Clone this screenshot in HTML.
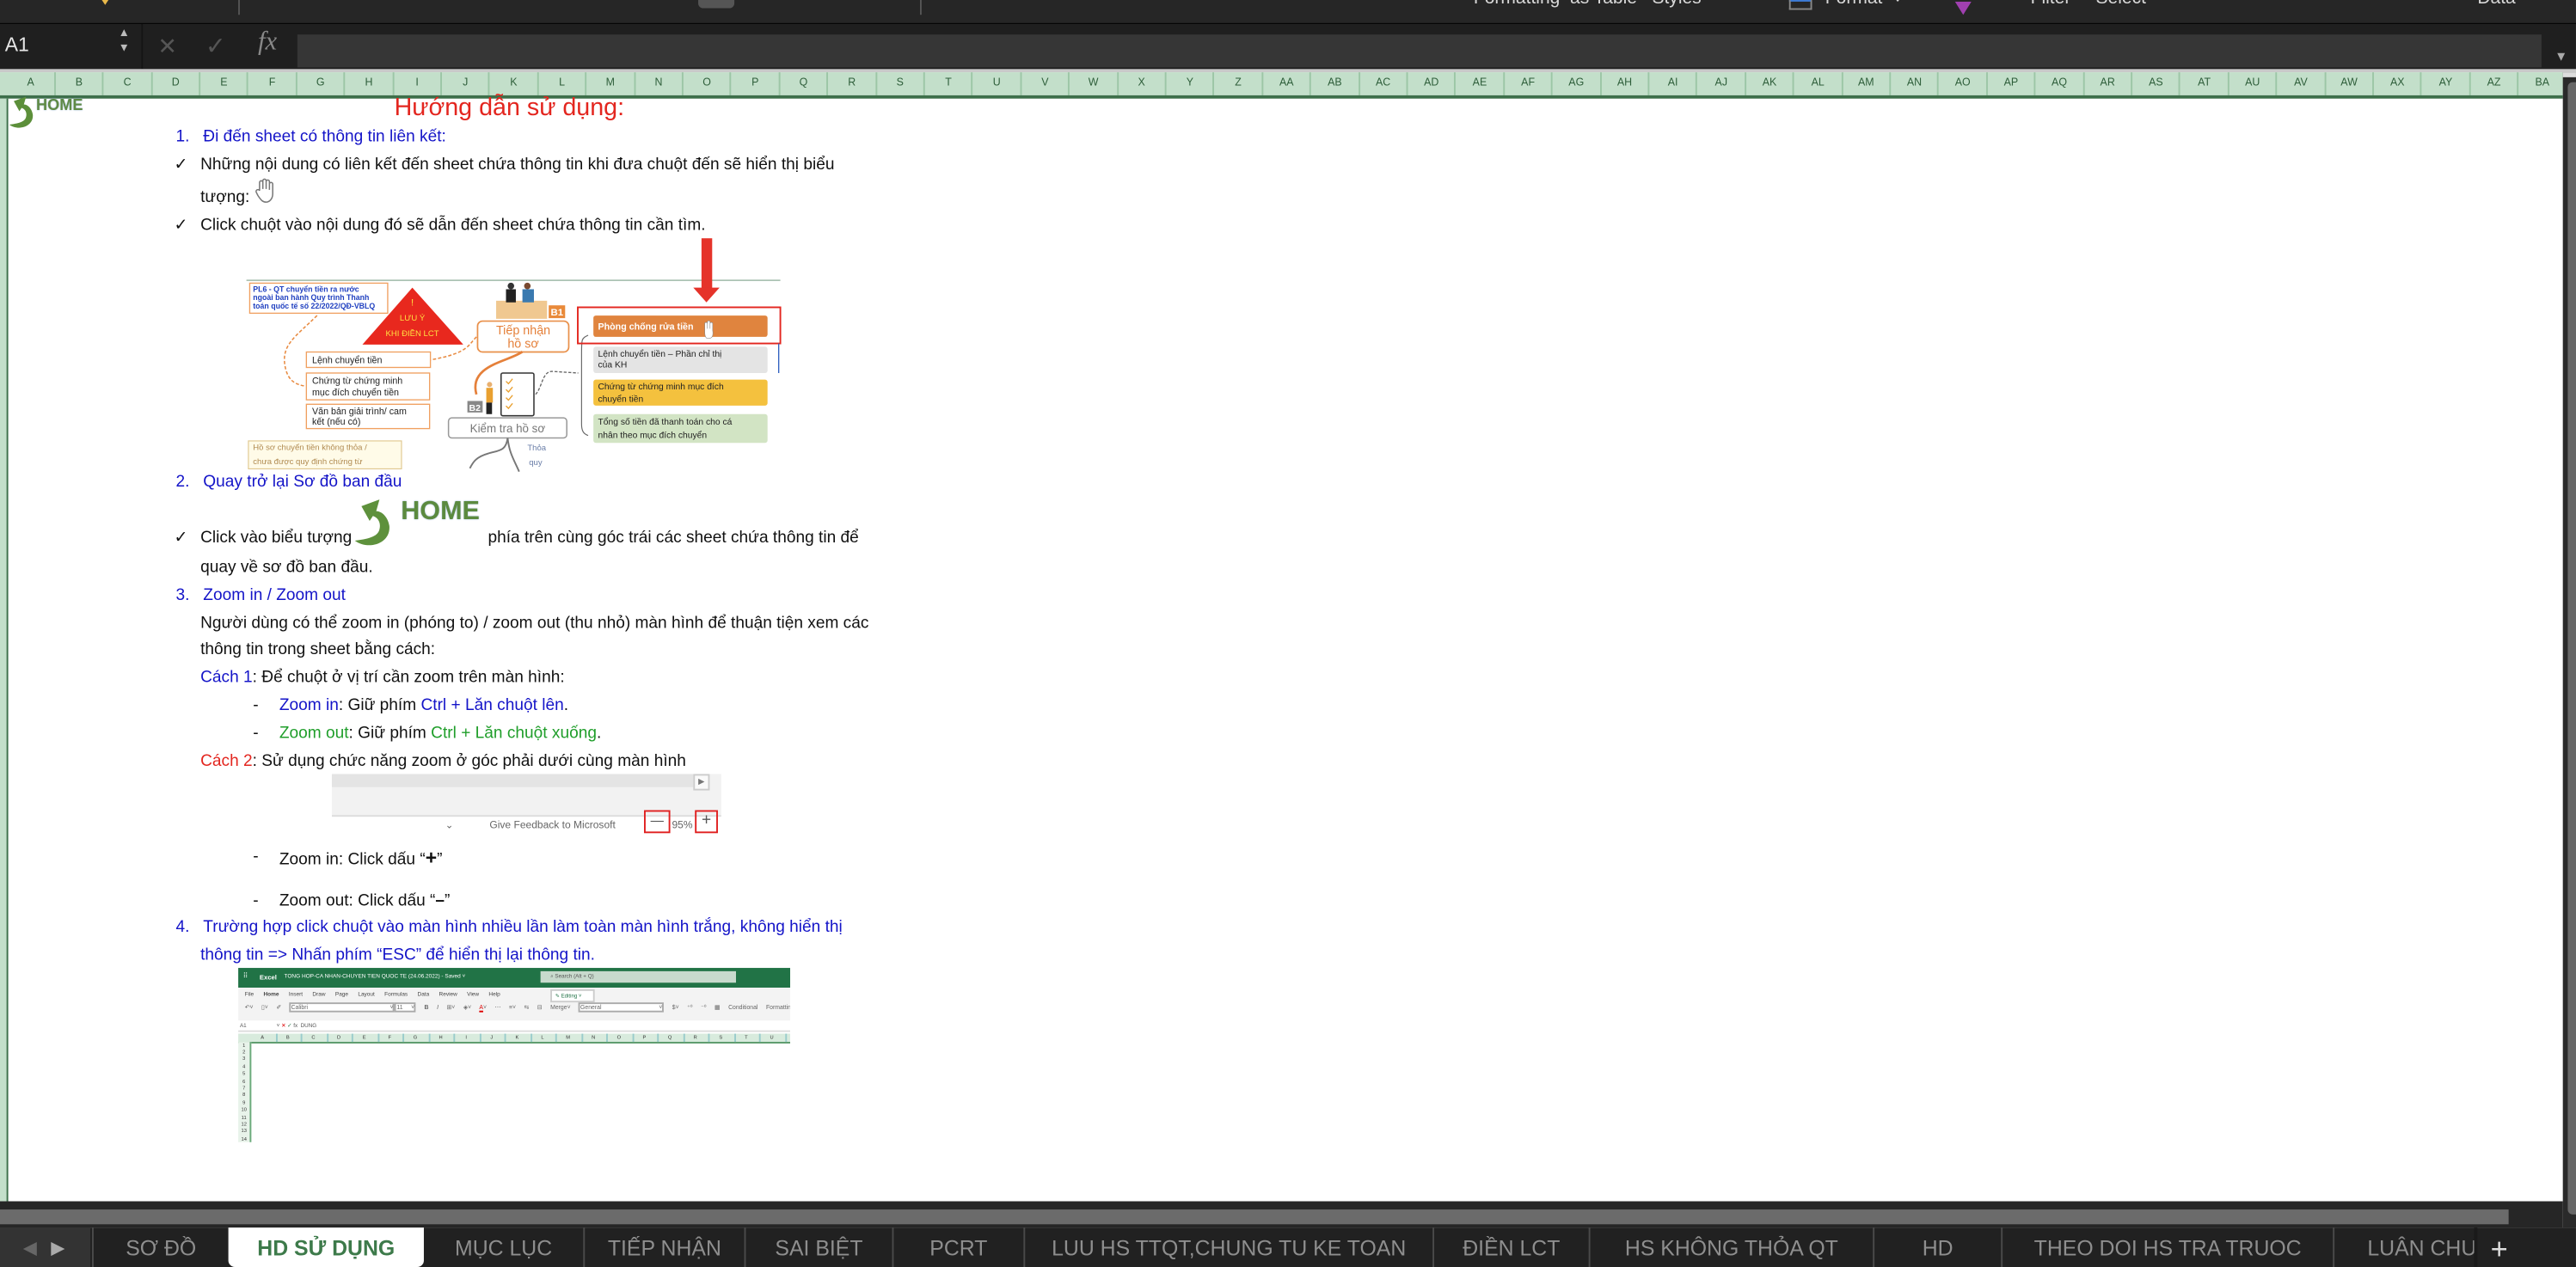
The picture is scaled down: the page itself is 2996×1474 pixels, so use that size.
<!DOCTYPE html>
<html><head><meta charset="utf-8">
<style>
html,body{margin:0;padding:0;background:#fff;width:2996px;height:1474px;overflow:hidden}
#w{position:absolute;left:0;top:0;width:1568px;height:771px;transform:scale(1.9107,1.9118);transform-origin:0 0;font-family:"Liberation Sans",Arial,sans-serif;overflow:hidden;background:#fff}
.a{position:absolute;white-space:nowrap}
.t{position:absolute;white-space:nowrap;font-size:10px;line-height:12px;color:#111}
.b{color:#1414c8}
.g{color:#1f9e2a}
.r{color:#e3261f}
.ch{position:absolute;top:44px;height:14px;width:29.4px;font-size:6.5px;line-height:14px;text-align:center;color:#2e5e3a;border-right:1px solid #9cc6a6;box-sizing:border-box}
.tab{position:absolute;top:747px;height:24px;font-size:13px;line-height:26px;color:#8e8e8e;text-align:center;border-left:1px solid #4a4a4a;box-sizing:border-box;white-space:nowrap;overflow:hidden}
</style></head><body><div id="w">
<!-- ribbon -->
<div class="a" style="left:0;top:0;width:1568px;height:14px;background:#262626;border-bottom:1.5px solid #050505"></div>
<div class="a" style="left:58px;top:-6px;width:12px;height:10px;"><svg width="12" height="10"><path d="M2 0 L10 0 L6 6Z" fill="#e8b84a"/></svg></div>
<div class="a" style="left:425px;top:0;width:22px;height:5px;background:#555;border-radius:0 0 3px 3px"></div>
<div class="a" style="left:145px;top:0;width:1px;height:9px;background:#555"></div>
<div class="a" style="left:560px;top:0;width:1px;height:9px;background:#555"></div>
<div class="a" style="left:897px;top:-7px;font-size:11px;color:#d8d8d8">Formatting &nbsp;as Table &nbsp;&nbsp;Styles</div>
<div class="a" style="left:1089px;top:-2px;width:14px;height:8px;border:1px solid #888;border-top:3px solid #3d7bd6;box-sizing:border-box"></div>
<div class="a" style="left:1111px;top:-7px;font-size:11px;color:#d8d8d8">Format &nbsp;˅</div>
<div class="a" style="left:1190px;top:-2px"><svg width="10" height="10"><path d="M0 0 L10 0 L5 8Z" fill="#a040b0"/></svg></div>
<div class="a" style="left:1236px;top:-7px;font-size:11px;color:#d8d8d8">Filter &nbsp;&nbsp;&nbsp;&nbsp;Select</div>
<div class="a" style="left:1508px;top:-7px;font-size:11px;color:#d8d8d8">Data</div>
<!-- formula bar -->
<div class="a" style="left:0;top:15px;width:1568px;height:28px;background:#1f1f1f"></div>
<div class="a" style="left:3px;top:20px;font-size:12px;color:#e6e6e6">A1</div>
<div class="a" style="left:72px;top:16px;font-size:7px;color:#bbb;line-height:9px">▲<br>▼</div>
<div class="a" style="left:86px;top:15px;width:1px;height:27px;background:#151515"></div>
<div class="a" style="left:96px;top:20px;font-size:14px;color:#555">✕</div>
<div class="a" style="left:125px;top:19px;font-size:15px;color:#555">✓</div>
<div class="a" style="left:157px;top:17px;font-size:16px;color:#888;font-family:'Liberation Serif',serif;font-style:italic">fx</div>
<div class="a" style="left:181px;top:21px;width:1366px;height:20px;background:#363636"></div>
<div class="a" style="left:1555px;top:30px;font-size:8px;color:#aaa">▼</div>
<div class="a" style="left:0;top:42px;width:1568px;height:2px;background:#c9c9c9"></div>
<!-- column headers -->
<div class="a" style="left:0;top:44px;width:1568px;height:14px;background:#c3dfca"></div>
<div id="cols"></div>
<div class="a" style="left:0;top:58px;width:1560px;height:2px;background:#3d6f4a"></div>
<!-- row header strip -->
<div class="a" style="left:0;top:60px;width:4px;height:671px;background:#c3dfca;border-right:1.5px solid #3d6f4a"></div>
<!-- right scrollbar -->
<div class="a" style="left:1559.6px;top:44px;width:9px;height:703px;background:#2a2a2a"></div>
<div class="a" style="left:1560px;top:44px;width:8px;height:3px;background:#ddd"></div>
<div class="a" style="left:1562.5px;top:50px;width:6px;height:689px;background:#676767;border-radius:3px 0 0 3px"></div>

<!-- HOME small -->
<svg class="a" style="left:5px;top:57px" width="17" height="22" viewBox="0 0 25 31"><path d="M1 27 C9 33 23 29 22 18 C21 12 17 9 14 9 L16 2 L5 6 L10 15 L12 12 C15 13 17 16 16 20 C15 25 8 26 1 27Z" fill="#5c8f3a"/></svg>
<div class="a" style="left:22px;top:59px;font-size:9.5px;font-weight:bold;color:#5f8a45;text-shadow:0 0 1px #9bb8d8">HOME</div>

<div class="a r" style="left:240px;top:57px;font-size:15px">Hướng dẫn sử dụng:</div>

<div class="t b" style="left:107px;top:78px">1.&nbsp;&nbsp;&nbsp;Đi đến sheet có thông tin liên kết:</div>
<div class="t" style="left:106px;top:95px">✓</div>
<div class="t" style="left:122px;top:95px">Những nội dung có liên kết đến sheet chứa thông tin khi đưa chuột đến sẽ hiển thị biểu</div>
<div class="t" style="left:122px;top:115px">tượng:</div>
<svg class="a" style="left:155px;top:108px" width="14" height="16" viewBox="0 0 14 16"><path d="M3 8 V3 a1 1 0 0 1 2 0 V7 V2 a1 1 0 0 1 2 0 V7 V2.5 a1 1 0 0 1 2 0 V7.5 V4 a1 1 0 0 1 2 0 V10 C11 13 9 15 7 15 C5 15 4 14 2 11 L1 9 a1 1 0 0 1 2 -1Z" fill="#fff" stroke="#777" stroke-width=".8"/></svg>
<div class="t" style="left:106px;top:132px">✓</div>
<div class="t" style="left:122px;top:132px">Click chuột vào nội dung đó sẽ dẫn đến sheet chứa thông tin cần tìm.</div>

<!-- mindmap image -->
<svg class="a" style="left:0;top:0" width="500" height="300" viewBox="0 0 500 300">
<line x1="150" y1="170.6" x2="475" y2="170.6" stroke="#9fb9a8" stroke-width=".8"/>
<rect x="427" y="145" width="6.5" height="31" fill="#e5332a"/>
<path d="M422 175 L438 175 L430 184Z" fill="#e5332a"/>
<rect x="152" y="172.3" width="84" height="18.3" fill="#fff" stroke="#f0a060" stroke-width=".7"/>
<text x="154" y="177.5" font-size="4.6" font-weight="bold" fill="#2040c0" font-family="Liberation Sans">PL6 - QT chuyển tiền ra nước</text>
<text x="154" y="182.6" font-size="4.6" font-weight="bold" fill="#2040c0" font-family="Liberation Sans">ngoài ban hành Quy trình Thanh</text>
<text x="154" y="187.8" font-size="4.6" font-weight="bold" fill="#2040c0" font-family="Liberation Sans">toán quốc tế số 22/2022/QĐ-VBLQ</text>
<path d="M251 175 L282 209.7 L220.6 209.7Z" fill="#e8281e"/>
<text x="251" y="186" font-size="6" fill="#ffe040" text-anchor="middle" font-family="Liberation Sans">!</text>
<text x="251" y="195" font-size="5" fill="#ffe040" text-anchor="middle" font-family="Liberation Sans">LƯU Ý</text>
<text x="251" y="204.5" font-size="5" fill="#ffe040" text-anchor="middle" font-family="Liberation Sans">KHI ĐIỀN LCT</text>
<path d="M193 192 C180 205 170 210 174 225 C176 232 180 234 186 235" fill="none" stroke="#e88a40" stroke-width=".8" stroke-dasharray="2 1.2"/>
<path d="M290 205 C285 210 285 215 262 219" fill="none" stroke="#e88a40" stroke-width=".8" stroke-dasharray="2 1.2"/>
<rect x="186.5" y="214.2" width="75.5" height="9.4" fill="#fff" stroke="#f0a060" stroke-width=".7"/>
<text x="190" y="221" font-size="5.6" fill="#222" font-family="Liberation Sans">Lệnh chuyển tiền</text>
<rect x="186.5" y="227" width="75" height="16.3" fill="#fff" stroke="#f0a060" stroke-width=".7"/>
<text x="190" y="233.5" font-size="5.6" fill="#222" font-family="Liberation Sans">Chứng từ chứng minh</text>
<text x="190" y="240.5" font-size="5.6" fill="#222" font-family="Liberation Sans">mục đích chuyển tiền</text>
<rect x="186.5" y="246" width="75" height="14.8" fill="#fff" stroke="#f0a060" stroke-width=".7"/>
<text x="190" y="252" font-size="5.6" fill="#222" font-family="Liberation Sans">Văn bản giải trình/ cam</text>
<text x="190" y="258.5" font-size="5.6" fill="#222" font-family="Liberation Sans">kết (nếu có)</text>
<rect x="151.2" y="268.3" width="93.2" height="17" fill="#fffbe8" stroke="#e0c890" stroke-width=".6"/>
<text x="154" y="273.8" font-size="5" fill="#b08a50" font-family="Liberation Sans">Hồ sơ chuyển tiền không thỏa /</text>
<text x="154" y="282.5" font-size="5" fill="#b08a50" font-family="Liberation Sans">chưa được quy định chứng từ</text>
<rect x="302" y="183" width="31" height="11" fill="#f0c890"/>
<circle cx="311" cy="174" r="2" fill="#333"/><rect x="308" y="176" width="6" height="8" fill="#222"/>
<circle cx="321" cy="174" r="2" fill="#7a4a30"/><rect x="318" y="176" width="7" height="8" fill="#3a7ab0"/>
<rect x="334" y="185.8" width="10" height="7.8" fill="#e98a3a"/>
<text x="335.2" y="192" font-size="6" font-weight="bold" fill="#fff" font-family="Liberation Sans">B1</text>
<rect x="290.7" y="195.4" width="55.5" height="18.8" rx="3" fill="#fff" stroke="#e9904a" stroke-width=".9"/>
<text x="318.5" y="203.5" font-size="7.5" fill="#e5803a" text-anchor="middle" font-family="Liberation Sans">Tiếp nhận</text>
<text x="318.5" y="211.5" font-size="7.5" fill="#e5803a" text-anchor="middle" font-family="Liberation Sans">hồ sơ</text>
<path d="M318 214 C310 220 285 222 290 240" fill="none" stroke="#e5803a" stroke-width="1.4"/>
<rect x="305" y="227" width="20" height="26" rx="1" fill="#fff" stroke="#333" stroke-width=".8"/>
<path d="M308 232 l1.5 1.5 2.5 -3 M308 237 l1.5 1.5 2.5 -3 M308 242 l1.5 1.5 2.5 -3 M308 247 l1.5 1.5 2.5 -3" stroke="#e9a030" stroke-width=".7" fill="none"/>
<circle cx="298" cy="234" r="1.6" fill="#e8b070"/><rect x="296" y="236" width="4" height="9" fill="#e9a030"/><rect x="296" y="245" width="3.5" height="7" fill="#222"/>
<rect x="284.5" y="244" width="9.3" height="7" fill="#888"/>
<text x="285.5" y="250" font-size="5.5" font-weight="bold" fill="#fff" font-family="Liberation Sans">B2</text>
<path d="M326 240 C330 236 330 226 336 226 L352 227" fill="none" stroke="#666" stroke-width=".7" stroke-dasharray="1.8 1"/>
<rect x="273" y="254.3" width="72" height="12.2" rx="2" fill="#fff" stroke="#999" stroke-width=".8"/>
<text x="309" y="263" font-size="7" fill="#777" text-anchor="middle" font-family="Liberation Sans">Kiểm tra hồ sơ</text>
<path d="M309 266.5 C308 275 303 274 297 276 C290 278 288 281 286 285" fill="none" stroke="#777" stroke-width="1"/>
<path d="M309 266.5 C310 276 313 280 316 287" fill="none" stroke="#777" stroke-width="1"/>
<text x="321" y="274" font-size="5" fill="#6a7ea8" font-family="Liberation Sans">Thỏa</text>
<text x="322" y="283" font-size="5" fill="#6a7ea8" font-family="Liberation Sans">quy</text>
<path d="M358 204 C354 206 354 206 354 215 L354 258 C354 262 355 264 358 265" fill="none" stroke="#666" stroke-width=".6"/>
<rect x="351.7" y="187" width="123.3" height="22" fill="none" stroke="#e3261f" stroke-width="1"/>
<rect x="361.2" y="192" width="106" height="13" rx="1.5" fill="#e0843e"/>
<text x="364" y="200.5" font-size="5.6" font-weight="bold" fill="#fff" font-family="Liberation Sans">Phòng chống rửa tiền</text>
<path d="M429 202 v-5 a.8 .8 0 0 1 1.6 0 v3 v-4 a.8 .8 0 0 1 1.6 0 v4 v-3 a.8 .8 0 0 1 1.6 0 v4 C434.5 205 433 206 431 206 C430 206 429 205 429 202Z" fill="#fff" stroke="#888" stroke-width=".3"/>
<rect x="361.2" y="211" width="106" height="16" rx="1.5" fill="#e4e4e4"/>
<text x="364" y="217" font-size="5.4" fill="#222" font-family="Liberation Sans">Lệnh chuyển tiền – Phần chỉ thị</text>
<text x="364" y="223.5" font-size="5.4" fill="#222" font-family="Liberation Sans">của KH</text>
<line x1="474" y1="209" x2="474" y2="227" stroke="#3060c0" stroke-width=".7"/>
<rect x="361.2" y="231" width="106" height="15.8" rx="1.5" fill="#f4c13e"/>
<text x="364" y="237" font-size="5.4" fill="#222" font-family="Liberation Sans">Chứng từ chứng minh mục đích</text>
<text x="364" y="244.5" font-size="5.4" fill="#222" font-family="Liberation Sans">chuyển tiền</text>
<rect x="361.2" y="252" width="106" height="17.5" rx="1.5" fill="#d2e4c4"/>
<text x="364" y="258.5" font-size="5.4" fill="#222" font-family="Liberation Sans">Tổng số tiền đã thanh toán cho cá</text>
<text x="364" y="266.5" font-size="5.4" fill="#222" font-family="Liberation Sans">nhân theo mục đích chuyển</text>
</svg>

<div class="t b" style="left:107px;top:288px">2.&nbsp;&nbsp;&nbsp;Quay trở lại Sơ đồ ban đầu</div>
<svg class="a" style="left:214px;top:302px" width="27" height="31" viewBox="0 0 25 31"><path d="M1 27 C9 33 23 29 22 18 C21 12 17 9 14 9 L16 2 L5 6 L10 15 L12 12 C15 13 17 16 16 20 C15 25 8 26 1 27Z" fill="#5e913c"/></svg>
<div class="a" style="left:244px;top:303px;font-size:16px;font-weight:bold;color:#5b8a3f;text-shadow:0 0 1px #8fb0d8">HOME</div>
<div class="t" style="left:106px;top:322px">✓</div>
<div class="t" style="left:122px;top:322px">Click vào biểu tượng</div>
<div class="t" style="left:297px;top:322px">phía trên cùng góc trái các sheet chứa thông tin để</div>
<div class="t" style="left:122px;top:340px">quay về sơ đồ ban đầu.</div>
<div class="t b" style="left:107px;top:357px">3.&nbsp;&nbsp;&nbsp;Zoom in / Zoom out</div>
<div class="t" style="left:122px;top:374px">Người dùng có thể zoom in (phóng to) / zoom out (thu nhỏ) màn hình để thuận tiện xem các</div>
<div class="t" style="left:122px;top:390px">thông tin trong sheet bằng cách:</div>
<div class="t" style="left:122px;top:407px"><span class="b">Cách 1</span>: Để chuột ở vị trí cần zoom trên màn hình:</div>
<div class="t" style="left:154px;top:424px">-</div>
<div class="t" style="left:170px;top:424px"><span class="b">Zoom in</span>: Giữ phím <span class="b">Ctrl + Lăn chuột lên</span>.</div>
<div class="t" style="left:154px;top:441px">-</div>
<div class="t" style="left:170px;top:441px"><span class="g">Zoom out</span>: Giữ phím <span class="g">Ctrl + Lăn chuột xuống</span>.</div>
<div class="t" style="left:122px;top:458px"><span class="r">Cách 2</span>: Sử dụng chức năng zoom ở góc phải dưới cùng màn hình</div>

<!-- zoom bar image -->
<div class="a" style="left:202px;top:471px;width:237px;height:25px;background:#f2f2f2;border-bottom:1px solid #ddd"></div>
<div class="a" style="left:202px;top:471px;width:220px;height:8px;background:#e4e4e4"></div>
<div class="a" style="left:422px;top:471px;width:8px;height:8px;background:#fafafa;border:0.5px solid #ccc;font-size:5px;line-height:8px;color:#777;text-align:center">▶</div>
<div class="a" style="left:271px;top:499px;font-size:6px;color:#666">⌄</div>
<div class="a" style="left:298px;top:499px;font-size:6.3px;color:#666">Give Feedback to Microsoft</div>
<div class="a" style="left:392px;top:493px;width:14px;height:12px;border:1.3px solid #e02020;font-size:8px;line-height:11px;text-align:center;color:#555">—</div>
<div class="a" style="left:409px;top:499px;font-size:6.3px;color:#666">95%</div>
<div class="a" style="left:423px;top:493px;width:12px;height:12px;border:1.3px solid #e02020;font-size:10px;line-height:12px;text-align:center;color:#555">+</div>

<div class="t" style="left:154px;top:516px">-</div>
<div class="t" style="left:170px;top:516px">Zoom in: Click dấu “<b style="font-size:12px">+</b>”</div>
<div class="t" style="left:154px;top:543px">-</div>
<div class="t" style="left:170px;top:543px">Zoom out: Click dấu “<b>–</b>”</div>
<div class="t b" style="left:107px;top:559px">4.&nbsp;&nbsp;&nbsp;Trường hợp click chuột vào màn hình nhiều lần làm toàn màn hình trắng, không hiển thị</div>
<div class="t b" style="left:122px;top:576px">thông tin =&gt; Nhấn phím “ESC” để hiển thị lại thông tin.</div>

<!-- excel screenshot -->
<div class="a" style="left:145px;top:589px;width:336px;height:106px;background:#fff;overflow:hidden">
 <div class="a" style="left:0;top:0;width:336px;height:11.5px;background:#217346"></div>
 <div class="a" style="left:3px;top:2px;font-size:4px;color:#fff">⠿</div>
 <div class="a" style="left:13px;top:3px;font-size:4px;color:#fff;font-weight:bold">Excel</div>
 <div class="a" style="left:28px;top:3px;font-size:3.4px;color:#fff">TONG HOP-CA NHAN-CHUYEN TIEN QUOC TE (24.06.2022) - Saved ˅</div>
 <div class="a" style="left:184px;top:2px;width:119px;height:7px;background:#c8dacd;font-size:3.3px;line-height:7px;color:#555;text-indent:6px">⌕ Search (Alt + Q)</div>
 <div class="a" style="left:0;top:11.5px;width:336px;height:20px;background:#f3f3f3"></div>
 <div class="a" style="left:4px;top:13.5px;font-size:3.4px;color:#444;word-spacing:5px">File <b>Home</b> Insert Draw Page&nbsp;Layout Formulas Data Review View Help</div>
 <div class="a" style="left:190px;top:13px;width:25px;height:6px;border:0.5px solid #ccc;background:#fff;font-size:3.2px;line-height:6px;color:#217346;text-indent:2px">✎ Editing ˅</div>
 <div class="a" style="left:4px;top:22px;font-size:3.6px;color:#666;word-spacing:4px">↶˅ ▯˅ ✐ <span style="border:0.4px solid #aaa;background:#fff">Calibri&nbsp;&nbsp;&nbsp;&nbsp;&nbsp;&nbsp;&nbsp;&nbsp;&nbsp;&nbsp;˅</span><span style="border:0.4px solid #aaa;background:#fff">11 ˅</span> <b>B</b> <i>I</i> ⊞˅ ◈˅ <u style="color:#d00">A</u>˅ ⋯ ≡˅ ⇆ ⊟ Merge˅ <span style="border:0.4px solid #aaa;background:#fff">General&nbsp;&nbsp;&nbsp;&nbsp;&nbsp;&nbsp;&nbsp;˅</span> $˅ ⁺⁰ ⁻⁰ ▦ Conditional&nbsp;Formatting˅</div>
 <div class="a" style="left:0;top:32.5px;width:336px;height:5.5px;background:#fff;border-bottom:0.4px solid #ddd;font-size:3.3px;line-height:5.5px;color:#555;text-indent:1px">A1&nbsp;&nbsp;&nbsp;&nbsp;&nbsp;&nbsp;&nbsp;&nbsp;&nbsp;&nbsp;&nbsp;&nbsp;&nbsp;&nbsp;&nbsp;&nbsp;&nbsp;&nbsp;&nbsp;&nbsp;˅ <span style="color:#d00">✕</span> <span style="color:#217346">✓</span> fx &nbsp;DUNG</div>
 <div class="a" style="left:0;top:40px;width:336px;height:4.5px;background:#d8ebdd;border-bottom:0.5px solid #5a9a6a"></div>
 <div id="xcols"></div>
 <div class="a" style="left:0;top:44.5px;width:7px;height:62px;background:#e8f3ea;border-right:0.5px solid #6aaa7a"></div>
 <div id="xrows"></div>
</div>

<!-- bottom -->
<div class="a" style="left:0;top:731px;width:1560px;height:16px;background:#262626"></div>
<div class="a" style="left:0;top:735.5px;width:1527px;height:9.5px;background:#6b6b6b"></div>
<div class="a" style="left:0;top:747px;width:1568px;height:24px;background:#212121"></div>
<div class="a" style="left:0;top:747px;width:55px;height:24px;background:#333"></div>
<div class="a" style="left:14px;top:753px;font-size:11px;color:#666">◀</div>
<div class="a" style="left:31px;top:753px;font-size:11px;color:#aaa">▶</div>
<div class="tab" style="left:56px;width:83px">SƠ ĐỒ</div>
<div class="tab" style="left:139px;width:119px;background:#fff;color:#3d7a4a;font-weight:bold;border-radius:0 0 4px 4px;border:none">HD SỬ DỤNG</div>
<div class="tab" style="left:258px;width:97px;border-left:none">MỤC LỤC</div>
<div class="tab" style="left:355px;width:98px">TIẾP NHẬN</div>
<div class="tab" style="left:453px;width:90px">SAI BIỆT</div>
<div class="tab" style="left:543px;width:80px">PCRT</div>
<div class="tab" style="left:623px;width:249px">LUU HS TTQT,CHUNG TU KE TOAN</div>
<div class="tab" style="left:872px;width:95px">ĐIỀN LCT</div>
<div class="tab" style="left:967px;width:173px">HS KHÔNG THỎA QT</div>
<div class="tab" style="left:1140px;width:78px">HD</div>
<div class="tab" style="left:1218px;width:202px">THEO DOI HS TRA TRUOC</div>
<div class="tab" style="left:1420px;width:86px;text-align:left;padding-left:20px">LUÂN CHUYEN</div>
<div class="a" style="left:1506px;top:747px;width:2px;height:24px;background:#1a1a1a"></div>
<div class="a" style="left:1516px;top:747px;font-size:18px;line-height:26px;color:#ddd">+</div>
</div>
<script>
var L=[];for(var i=0;i<53;i++){var n=i<26?String.fromCharCode(65+i):(i<52?'A'+String.fromCharCode(65+i-26):'BA');L.push(n);}
var h='';for(var i=0;i<53;i++){h+='<div class="ch" style="left:'+(4.5+i*29.4)+'px">'+L[i]+'</div>';}
document.getElementById('cols').outerHTML=h;
var x='';for(var i=0;i<21;i++){x+='<div class="a" style="left:'+(7+i*15.5)+'px;top:40px;width:15.5px;height:4.5px;font-size:3px;line-height:4.5px;text-align:center;color:#333;border-right:0.3px solid #9cc">'+L[i]+'</div>';}
document.getElementById('xcols').outerHTML=x;
var r='';for(var i=1;i<=14;i++){r+='<div class="a" style="left:0;top:'+(44.5+(i-1)*4.4)+'px;width:7px;height:4.4px;font-size:3px;line-height:4.4px;text-align:center;color:#333">'+i+'</div>';}
document.getElementById('xrows').outerHTML=r;
</script>
</body></html>
